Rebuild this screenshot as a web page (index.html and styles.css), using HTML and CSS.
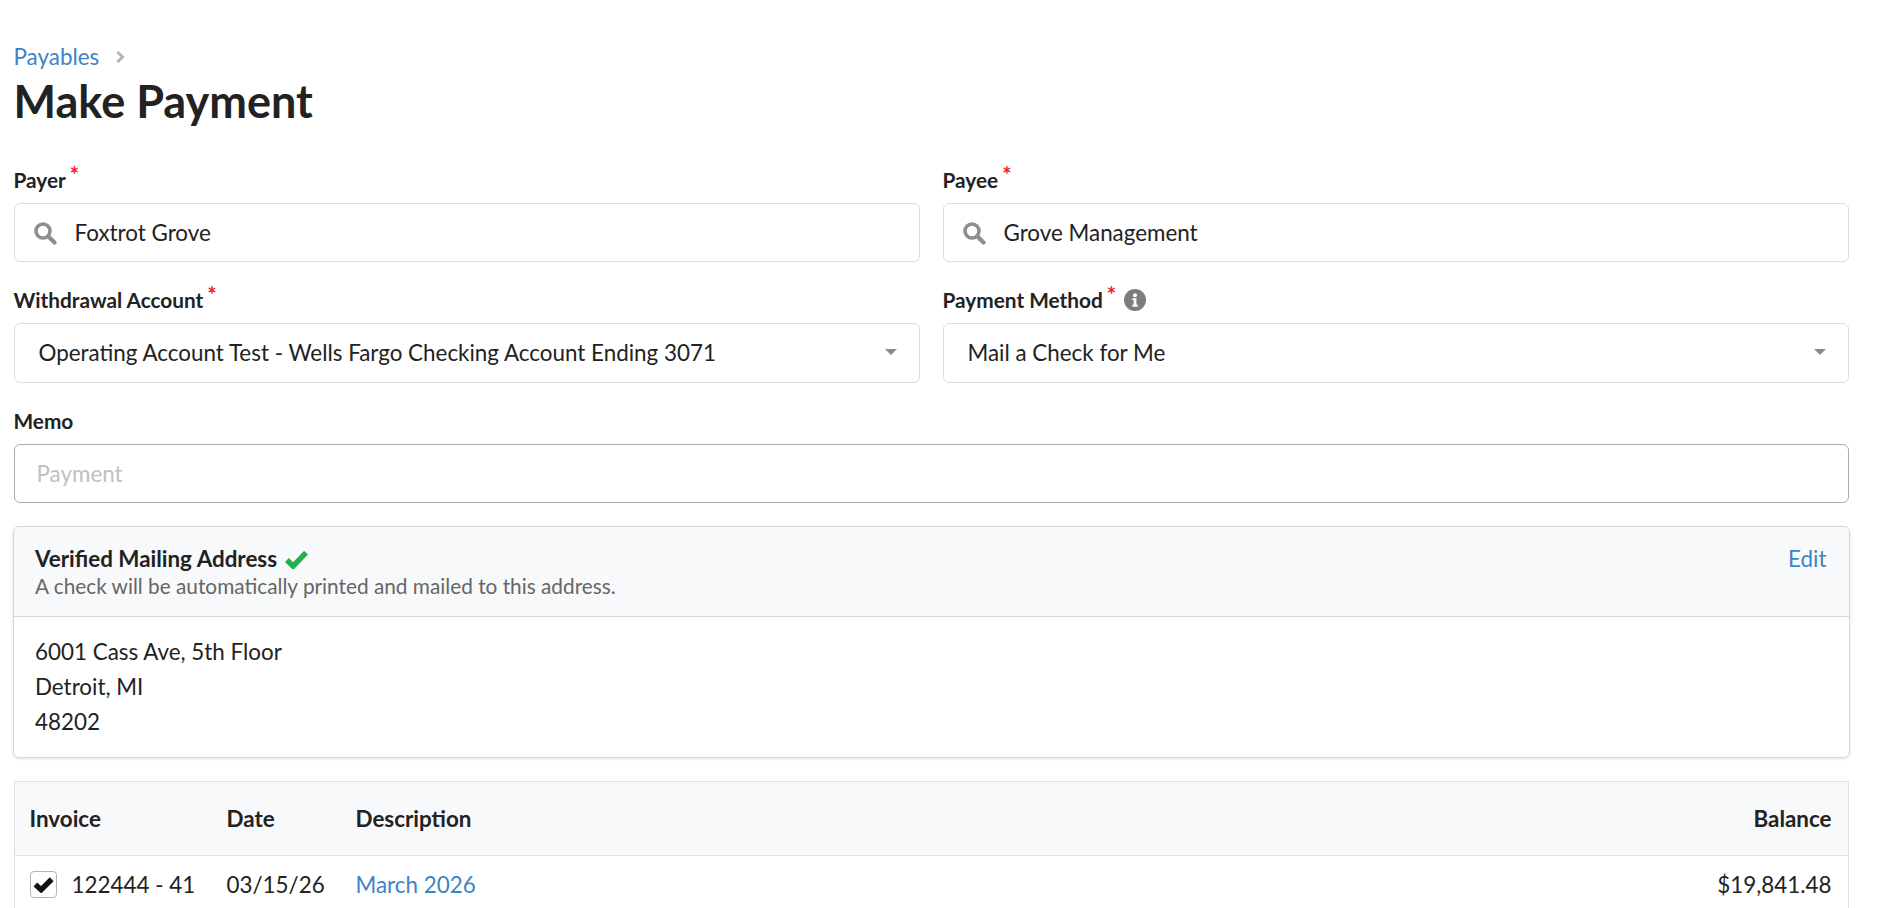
FILE: index.html
```html
<!DOCTYPE html>
<html lang="en">
<head>
    <meta charset="UTF-8">
    <meta name="viewport" content="width=device-width, initial-scale=1.0">
    <title>Make Payment</title>
    <link rel="stylesheet" href="styles.css">
</head>
<body>
    <nav class="breadcrumb">
        <a href="#" class="link">Payables</a>
        <svg class="breadcrumb-arrow" viewBox="0 0 10 14" width="10" height="14"><path d="M2.5 2l5 5-5 5" fill="none" stroke="#b5b5b5" stroke-width="3"/></svg>
    </nav>
    <h1 class="page-title">Make Payment</h1>

    <form action="" class="payment-form">
        <div class="field-row">
            <div class="field">
                <div class="field-label">Payer<span class="required">*</span></div>
                <div class="input-box search-box">
                    <svg class="search-icon" viewBox="0 0 24 24" width="24" height="24"><circle cx="10" cy="10" r="7" fill="none" stroke="#8f8f8f" stroke-width="3.6"/><path d="M15.5 15.5l6 6" stroke="#8f8f8f" stroke-width="4.2" stroke-linecap="round"/></svg>
                    <span>Foxtrot Grove</span>
                </div>
            </div>
            <div class="field">
                <div class="field-label">Payee<span class="required">*</span></div>
                <div class="input-box search-box">
                    <svg class="search-icon" viewBox="0 0 24 24" width="24" height="24"><circle cx="10" cy="10" r="7" fill="none" stroke="#8f8f8f" stroke-width="3.6"/><path d="M15.5 15.5l6 6" stroke="#8f8f8f" stroke-width="4.2" stroke-linecap="round"/></svg>
                    <span>Grove Management</span>
                </div>
            </div>
        </div>

        <div class="field-row">
            <div class="field">
                <div class="field-label">Withdrawal Account<span class="required">*</span></div>
                <div class="input-box select-box">
                    <span>Operating Account Test - Wells Fargo Checking Account Ending 3071</span>
                    <span class="caret"></span>
                </div>
            </div>
            <div class="field">
                <div class="field-label">Payment Method<span class="required">*</span>
                    <svg class="info-icon" viewBox="0 0 22 22" width="22" height="22"><circle cx="11" cy="11" r="11" fill="#7d7d7d"/><circle cx="11" cy="6.2" r="2" fill="#fff"/><path d="M8.4 9.2h4v6.4h1.3v2.1H8.4v-2.1h1.3v-4.3H8.4z" fill="#fff"/></svg>
                </div>
                <div class="input-box select-box">
                    <span>Mail a Check for Me</span>
                    <span class="caret"></span>
                </div>
            </div>
        </div>

        <div class="field">
            <div class="field-label">Memo</div>
            <div class="input-box memo-box">Payment</div>
        </div>
    </form>

    <section class="address-card">
        <div class="address-head">
            <div>
                <div class="address-title">Verified Mailing Address
                    <svg class="verified-icon" viewBox="0 0 20 16" width="23" height="18"><path d="M1.5 8l5.5 5.5L18.5 1.5" fill="none" stroke="#22b14c" stroke-width="4.8"/></svg>
                </div>
                <div class="address-note">A check will be automatically printed and mailed to this address.</div>
            </div>
            <a href="#" class="link edit-link">Edit</a>
        </div>
        <div class="address-body">
            <div>6001 Cass Ave, 5th Floor</div>
            <div>Detroit, MI</div>
            <div>48202</div>
        </div>
    </section>

    <table class="invoice-table">
        <thead>
            <tr>
                <th class="col-invoice">Invoice</th>
                <th class="col-date">Date</th>
                <th>Description</th>
                <th class="col-balance">Balance</th>
            </tr>
        </thead>
        <tbody>
            <tr>
                <td class="col-invoice">
                    <div class="invoice-cell">
                        <span class="checkbox"><svg viewBox="0 0 18 14" width="21" height="17"><path d="M2 7l5 4.5L16 2.5" fill="none" stroke="#111" stroke-width="4.6"/></svg></span>
                        <span>122444 - 41</span>
                    </div>
                </td>
                <td class="col-date">03/15/26</td>
                <td><a href="#" class="link">March 2026</a></td>
                <td class="col-balance">$19,841.48</td>
            </tr>
        </tbody>
    </table>
</body>
</html>
```

FILE: styles.css
```css
html {
    overflow: hidden;
}
body {
    font-family: Lato, "Open Sans", sans-serif;
    font-size: 22.4px;
    line-height: 35px;
    margin: 0;
    padding: 39px 51.5px 0 13.5px;
    background-color: #fff;
    color: #222;
    height: 869px;
    overflow: hidden;
}
.link {
    color: #3d83c6;
    text-decoration: none;
}
.breadcrumb {
    display: flex;
    align-items: center;
    gap: 16px;
    height: 35px;
    margin-bottom: 1px;
}
.page-title {
    margin: 0 0 35px;
    font-size: 45px;
    line-height: 52px;
    font-weight: 700;
}
.payment-form {
    display: flex;
    flex-direction: column;
    gap: 20px;
}
.field-row {
    display: grid;
    grid-template-columns: 1fr 1fr;
    gap: 23px;
}
.field-label {
    display: flex;
    align-items: center;
    font-size: 20.8px;
    font-weight: 700;
    height: 35px;
    margin-bottom: 6px;
}
.required {
    color: #e5202a;
    font-size: 22px;
    font-weight: 700;
    margin-left: 4px;
    position: relative;
    top: -5px;
}
.info-icon {
    margin-left: 8px;
}
.input-box {
    display: flex;
    align-items: center;
    box-sizing: border-box;
    height: 59px;
    border: 1px solid #dcdcdc;
    border-radius: 6px;
}
.search-box {
    padding-left: 18px;
    gap: 18px;
}
.select-box {
    height: 60px;
    justify-content: space-between;
    padding: 0 22px 2px 24px;
}
.caret {
    width: 0;
    height: 0;
    border-left: 6px solid transparent;
    border-right: 6px solid transparent;
    border-top: 6px solid #8a8a8a;
}
.memo-box {
    border-color: #adadad;
    color: #c0c0c0;
    padding-left: 22px;
}
.address-card {
    margin: 23px -1px 23px -1px;
    border: 1px solid #d6d6d6;
    border-radius: 6px;
    box-shadow: 0 1px 3px rgba(0,0,0,0.12);
    overflow: hidden;
}
.address-head {
    display: flex;
    justify-content: space-between;
    box-sizing: border-box;
    height: 90px;
    padding: 18px 22px 0 21.5px;
    background-color: #f8f9fb;
    border-bottom: 1px solid #d6d6d6;
}
.address-title {
    font-weight: 700;
    line-height: 28px;
}
.edit-link {
    line-height: 28px;
}
.verified-icon {
    margin-left: 3px;
    vertical-align: -2px;
}
.address-note {
    font-size: 20.8px;
    line-height: 26px;
    color: #666;
}
.address-body {
    padding: 17px 21.5px 18px;
}
.invoice-table {
    width: 100%;
    border-collapse: collapse;
    border: 1px solid #e0e0e0;
}
.invoice-table th {
    height: 73px;
    padding: 0;
    text-align: left;
    background-color: #f8f9fb;
    border-bottom: 1px solid #e0e0e0;
    font-weight: 700;
}
.invoice-table td {
    height: 56px;
    padding: 0;
}
.col-invoice {
    width: 197px;
    padding-left: 15px !important;
}
.col-date {
    width: 129px;
}
.invoice-table .col-balance {
    text-align: right;
    padding-right: 16px;
}
.invoice-cell {
    display: flex;
    align-items: center;
    gap: 15px;
}
.checkbox {
    display: flex;
    align-items: center;
    justify-content: center;
    box-sizing: border-box;
    width: 27px;
    height: 27px;
    border: 1px solid #b5b5b5;
    border-radius: 4px;
}
```
